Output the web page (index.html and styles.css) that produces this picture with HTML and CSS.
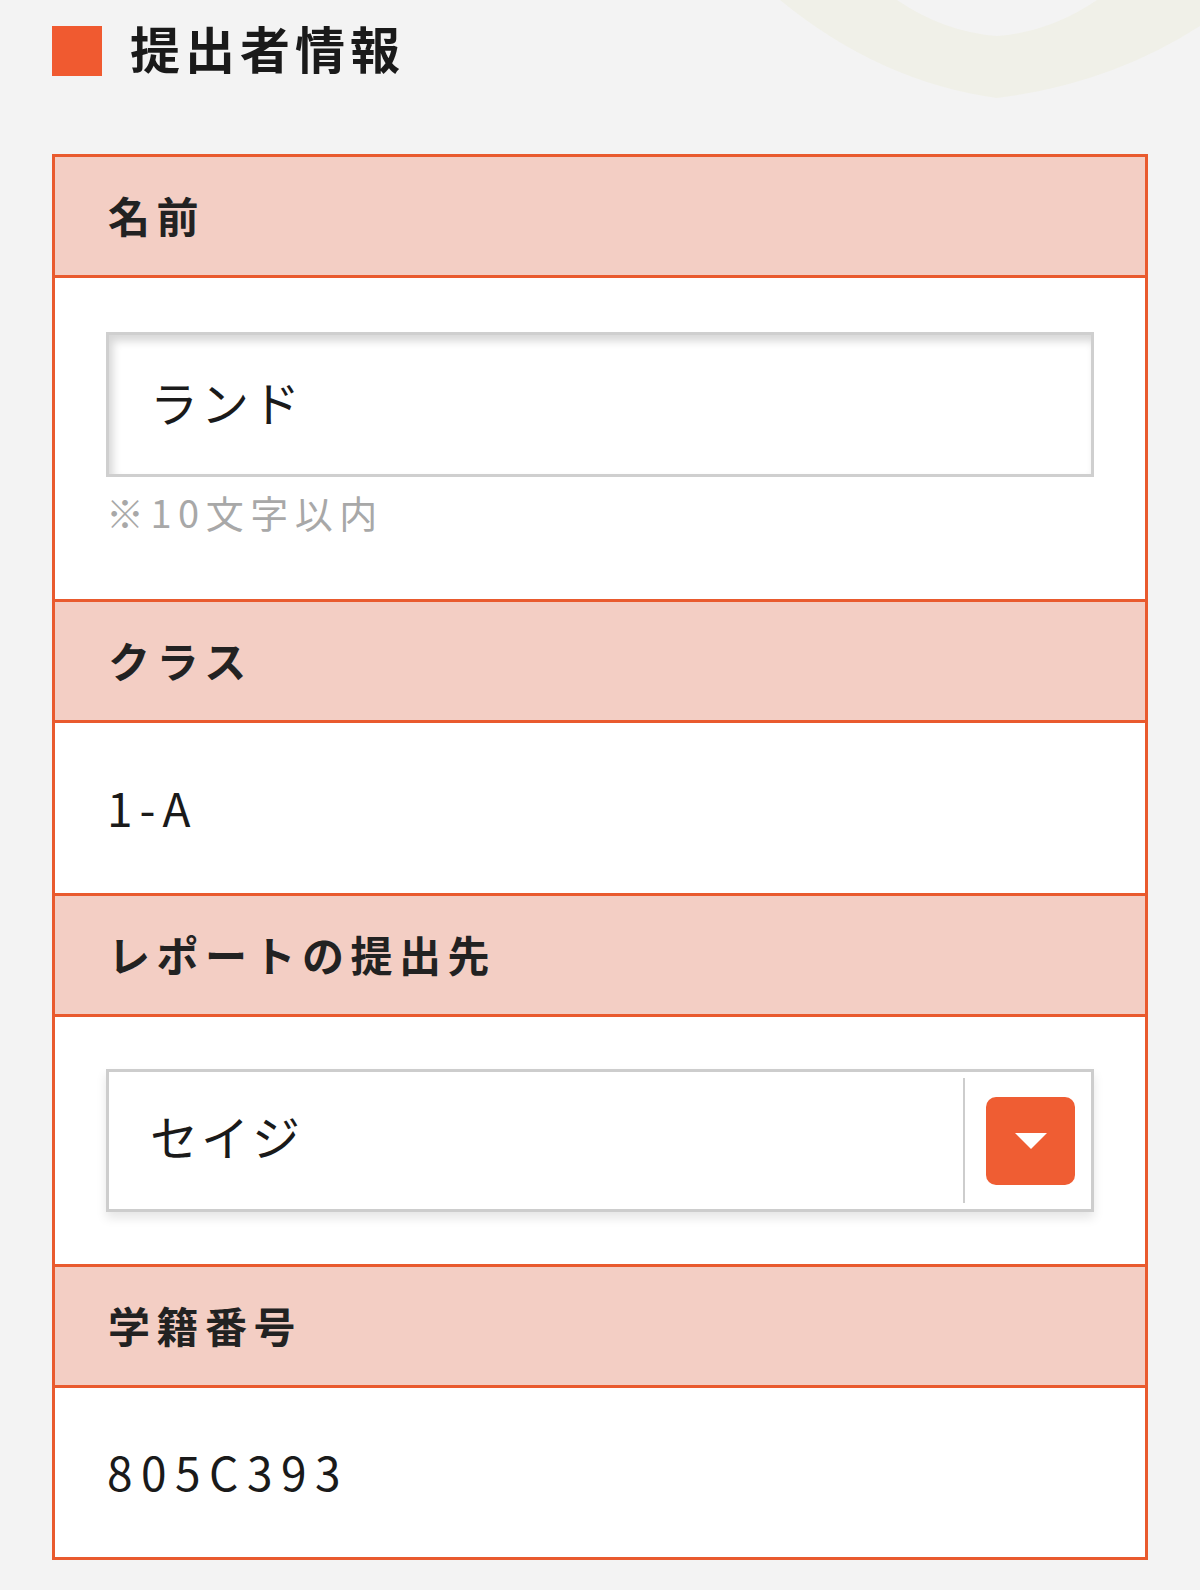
FILE: index.html
```html
<!DOCTYPE html>
<html lang="ja">
<head>
<meta charset="utf-8">
<title>提出者情報</title>
<link rel="stylesheet" href="styles.css">
</head>
<body>
<div class="page">
  <svg class="deco" width="420" height="110" viewBox="780 0 420 110" aria-hidden="true">
    <path d="M780,0 Q880,82 997,98 Q1110,84 1200,26 L1200,0 L1097,0 Q1050,32 997,36 Q944,32 897,0 Z" fill="#f0f0e8"/>
  </svg>
  <h1 class="title"><span class="title-mark"></span><span class="title-text">提出者情報</span></h1>
  <dl class="form-table">
    <dt class="row-head">名前</dt>
    <dd class="row-body row-body--name">
      <div class="text-input">ランド</div>
      <p class="note">※10文字以内</p>
    </dd>
    <dt class="row-head">クラス</dt>
    <dd class="row-body row-body--plain"><span class="value value--class">1-A</span></dd>
    <dt class="row-head">レポートの提出先</dt>
    <dd class="row-body row-body--select">
      <div class="select">
        <span class="select-value">セイジ</span>
        <span class="select-divider"></span>
        <span class="select-btn-wrap"><span class="select-btn"><svg width="34" height="18" viewBox="0 0 34 18"><path d="M1,1 L33,1 L17,17 Z" fill="#fff"/></svg></span></span>
      </div>
    </dd>
    <dt class="row-head">学籍番号</dt>
    <dd class="row-body row-body--plain row-body--last"><span class="value value--id">805C393</span></dd>
  </dl>
</div>
</body>
</html>
```

FILE: styles.css
```css
html, body {
  margin: 0;
  padding: 0;
  background: #f3f3f3;
}
body {
  font-family: "Noto Sans CJK JP", "Noto Sans", sans-serif;
  color: #1a1a1a;
}
.page {
  position: relative;
  padding: 26px 52px 31px 52px;
  overflow: hidden;
}
.deco {
  position: absolute;
  top: 0;
  right: 0;
}
.title {
  position: relative;
  display: flex;
  align-items: flex-start;
  gap: 28px;
  margin: 0 0 78px 0;
  height: 50px;
}
.title-mark {
  width: 50px;
  height: 50px;
  background: #f05a30;
  flex: none;
}
.title-text {
  font-size: 50px;
  font-weight: 700;
  letter-spacing: 5px;
  line-height: 50px;
  margin-top: -4px;
  color: #1a1a1a;
}
.form-table {
  position: relative;
  margin: 0;
  border: 3px solid #e95a2e;
  background: #fff;
}
.row-head {
  margin: 0;
  height: 118px;
  box-sizing: border-box;
  display: flex;
  align-items: center;
  padding: 0 53px 4px 53px;
  background: #f3cec4;
  border-bottom: 3px solid #e95a2e;
  font-size: 42px;
  font-weight: 700;
  letter-spacing: 6.5px;
  color: #222;
}
.row-head {
  height: 121px;
}
.row-body {
  margin: 0;
  background: #fff;
  border-bottom: 3px solid #e95a2e;
}
.row-body--last {
  border-bottom: none;
}
.row-body--name {
  padding: 54px 51px 61px 51px;
}
.text-input {
  height: 145px;
  box-sizing: border-box;
  border: 3px solid #cfcfcf;
  box-shadow: inset 4px 6px 9px rgba(0, 0, 0, 0.16);
  display: flex;
  align-items: center;
  padding: 0 0 8px 41px;
  font-size: 48px;
  letter-spacing: 3px;
  color: #1a1a1a;
  background: #fff;
}
.note {
  margin: 9px 0 0 0;
  font-size: 38px;
  line-height: 52px;
  letter-spacing: 6.5px;
  color: #a8a8a8;
}
.row-body--plain {
  height: 170px;
  box-sizing: border-box;
  display: flex;
  align-items: center;
  padding: 0 52px 3px 52px;
}
.row-body--plain {
  height: 173px;
}
.row-body--last {
  height: 169px;
}
.value {
  color: #1a1a1a;
}
.value--class {
  font-size: 46px;
  letter-spacing: 7px;
}
.value--id {
  font-size: 46px;
  letter-spacing: 8.5px;
}
.row-body--select {
  padding: 52px 51px 52px 51px;
}
.select {
  height: 143px;
  box-sizing: border-box;
  border: 3px solid #cdcdcd;
  box-shadow: 0 6px 10px rgba(0, 0, 0, 0.1);
  display: flex;
  align-items: stretch;
  background: #fff;
}
.select-value {
  flex: 1;
  display: flex;
  align-items: center;
  padding: 0 0 12px 41px;
  font-size: 48px;
  letter-spacing: 3px;
  color: #1a1a1a;
}
.select-divider {
  width: 2px;
  background: #cdcdcd;
  margin: 6px 0;
  flex: none;
}
.select-btn-wrap {
  display: flex;
  align-items: center;
  padding: 0 16px 0 21px;
}
.select-btn {
  width: 89px;
  height: 88px;
  border-radius: 10px;
  background: #ef5d33;
  display: flex;
  align-items: center;
  justify-content: center;
}
```
